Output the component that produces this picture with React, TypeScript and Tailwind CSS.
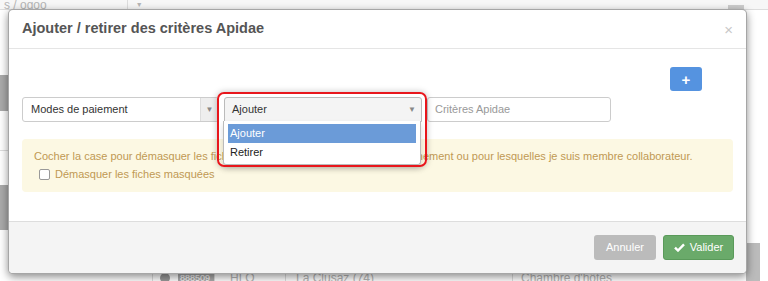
import React from "react";

const font = { fontFamily: '"Liberation Sans", Arial, sans-serif' };

const Caret = () => <span className="text-[8px] leading-none text-[#888]">▼</span>;

const BackgroundPage = () => (
  <div className="absolute inset-0 bg-white text-[12px] text-[#b5b5b5]">
    {/* top strip */}
    <div className="flex h-[10px] items-end border-b border-[#ddd] bg-[#f7f7f7]">
      <span className="ml-[4px] leading-[8px]">s / ogoo</span>
      <span className="ml-[80px] h-full border-l border-[#ddd]" />
      <span className="ml-[8px] text-[7px] leading-[8px]">▼</span>
    </div>
    {/* left strip */}
    <div className="absolute left-0 top-[75px] h-[36px] w-[8px] bg-[#aaa]" />
    <div className="absolute left-0 top-[185px] h-[45px] w-[8px] bg-[#aaa]" />
    <div className="absolute left-0 top-[150px] h-px w-[8px] bg-[#ddd]" />
    {/* right strip */}
    <div className="absolute right-[8px] top-[243px] h-[38px] w-[14px] bg-[#bbb]" />
    <div className="absolute right-[24px] top-[5px] h-[5px] w-[16px] bg-[#ccc]" />
    {/* bottom table row */}
    <div className="absolute bottom-0 left-[152px] flex h-[9px] items-start leading-[12px]">
      <span className="flex w-[24px] justify-center border-l border-[#ddd]">
        <span className="mt-[1px] h-[10px] w-[10px] rounded-full bg-[#999]" />
      </span>
      <span className="ml-[2px] w-[36px] bg-[#aaa] px-[2px] text-[9px] text-white">888509</span>
      <span className="w-[71px] border-l border-[#ddd] pl-[15px]">HLO</span>
      <span className="w-[227px] border-l border-[#ddd] pl-[10px]">La Clusaz (74)</span>
      <span className="w-[190px] border-l border-[#ddd] pl-[8px]">Chambre d'hôtes</span>
      <span className="border-l border-[#ddd]" />
    </div>
  </div>
);

export default function App() {
  return (
    <div className="relative h-[281px] w-[768px] overflow-hidden bg-white" style={font}>
      <BackgroundPage />

      {/* Modal */}
      <div className="absolute left-[8px] top-[9px] flex h-[265px] w-[739px] flex-col overflow-hidden rounded-[5px] border border-[rgba(0,0,0,0.35)] bg-white shadow-[0_3px_9px_rgba(0,0,0,0.45)]">
        {/* Header */}
        <div className="flex h-[39px] items-center justify-between border-b border-[#e5e5e5] pl-[13px] pr-[13px]">
          <h4 className="text-[14.5px] font-bold text-[#555]">Ajouter / retirer des critères Apidae</h4>
          <span className="text-[15px] leading-none text-[#c8c8c8]">×</span>
        </div>

        {/* Body */}
        <div className="relative flex flex-1 flex-col px-[13px] pt-[18px]">
          <div className="flex justify-end pr-[31px]">
            <button className="flex h-[24px] w-[32px] items-center justify-center rounded-[3px] bg-[#5593e0] text-[15px] font-bold leading-none text-white">
              +
            </button>
          </div>

          <div className="mt-[6px] flex h-[25px] items-stretch text-[11px] text-[#333]">
            <div className="flex w-[197px] overflow-hidden rounded-[3px] border border-[#ccc] bg-white">
              <span className="flex flex-1 items-center pl-[8px]">Modes de paiement</span>
              <span className="flex w-[18px] items-center justify-center border-l border-[#ddd] bg-[#eee]">
                <Caret />
              </span>
            </div>
            <div className="ml-[5px] flex w-[198px] overflow-hidden rounded-t-[3px] border border-[#bbb] bg-[#f4f4f4]">
              <span className="flex flex-1 items-center pl-[7px]">Ajouter</span>
              <span className="flex w-[18px] items-center justify-center">
                <Caret />
              </span>
            </div>
            <div className="ml-[5px] flex w-[184px] items-center rounded-[3px] border border-[#ccc] bg-white pl-[7px] text-[#999]">
              Critères Apidae
            </div>
          </div>

          <div className="mt-[17px] rounded-[4px] bg-[#fcf8e3] px-[12px] pb-[11px] pt-[10px] text-[11px] text-[#c09853]">
            <p className="whitespace-nowrap leading-[14px]">
              Cocher la case pour démasquer les fiches masquées dont je possède un abonnement ou pour lesquelles je suis membre collaborateur.
            </p>
            <label className="ml-[5px] mt-[4px] flex items-center gap-[5px] leading-[14px]">
              <span className="h-[11px] w-[11px] rounded-[2px] border border-[#999] bg-white" />
              Démasquer les fiches masquées
            </label>
          </div>

          {/* Dropdown open list */}
          <div className="absolute left-[214px] top-[72px] w-[198px] rounded-b-[3px] border border-t-0 border-[#bbb] bg-white px-[4px] pb-[2px] pt-[3px] text-[11px] shadow-[0_4px_6px_rgba(0,0,0,0.15)]">
            <div className="flex h-[19px] items-center bg-[#6b9bd8] pl-[2px] text-white">Ajouter</div>
            <div className="flex h-[19px] items-center pl-[2px] text-[#222]">Retirer</div>
          </div>

          {/* Red annotation outline */}
          <div className="absolute left-[208px] top-[43px] h-[75px] w-[210px] rounded-[7px] border-2 border-[#e8161c] shadow-[0_0_6px_rgba(0,0,0,0.25)]" />
        </div>

        {/* Footer */}
        <div className="flex h-[52px] items-center justify-end gap-[7px] border-t border-[#ddd] bg-[#f4f4f4] pr-[12px]">
          <button className="h-[25px] w-[62px] rounded-[3px] bg-[#bbbbbb] text-[11px] text-white">Annuler</button>
          <button className="flex h-[25px] w-[71px] items-center justify-center gap-[5px] rounded-[3px] border border-[#5a9a5a] bg-[#6aaa6a] text-[11px] text-white">
            <svg width="11" height="9" viewBox="0 0 11 9" fill="none">
              <path d="M1 4.6 L4 7.5 L10 1.3" stroke="white" strokeWidth="2.4" />
            </svg>
            Valider
          </button>
        </div>
      </div>
    </div>
  );
}
